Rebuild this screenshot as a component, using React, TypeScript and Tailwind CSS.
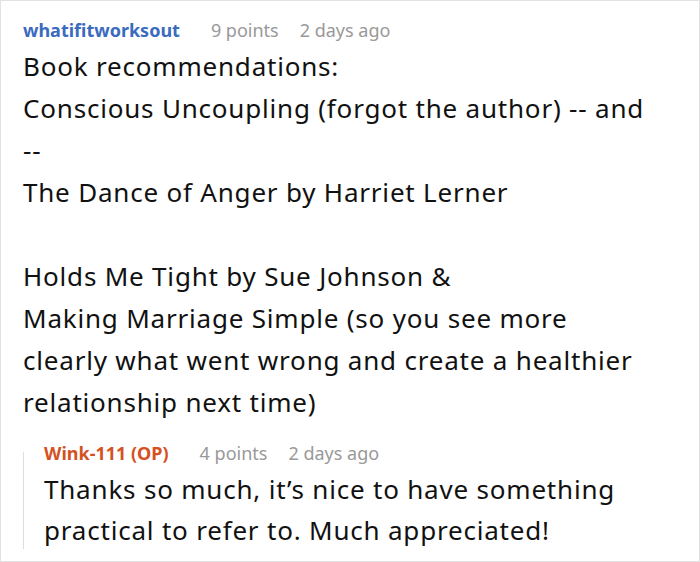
import React from 'react'

type Comment = {
  author: string
  op?: boolean
  points: number
  age: string
  lines: string[]
}

const parent: Comment = {
  author: 'whatifitworksout',
  points: 9,
  age: '2 days ago',
  lines: [
    'Book recommendations:',
    'Conscious Uncoupling (forgot the author) -- and',
    '--',
    'The Dance of Anger by Harriet Lerner',
    '',
    'Holds Me Tight by Sue Johnson &',
    'Making Marriage Simple (so you see more',
    'clearly what went wrong and create a healthier',
    'relationship next time)',
  ],
}

const reply: Comment = {
  author: 'Wink-111 (OP)',
  op: true,
  points: 4,
  age: '2 days ago',
  lines: ['Thanks so much, it’s nice to have something', 'practical to refer to. Much appreciated!'],
}

function Meta({ c }: { c: Comment }) {
  return (
    <div className="flex items-baseline text-[18px] leading-[24px]">
      <span className={c.op ? 'font-bold text-[#d4521f]' : 'font-bold text-[#3a6bbf]'}>{c.author}</span>
      <span className="ml-[31px] text-[#999]">{c.points} points</span>
      <span className="ml-[21px] text-[#999]">{c.age}</span>
    </div>
  )
}

function Body({ lines, tight }: { lines: string[]; tight?: boolean }) {
  return (
    <div className="text-[26px] tracking-[0.8px] text-[#111]">
      {lines.map((l, i) => (
        <div key={i} className={tight ? 'h-[41px] leading-[41px] whitespace-nowrap' : 'h-[42px] leading-[42px] whitespace-nowrap'}>
          {l}
        </div>
      ))}
    </div>
  )
}

export default function App() {
  return (
    <div
      className="w-[700px] h-[562px] bg-white border border-[#e2e2e2] overflow-hidden"
      style={{ fontFamily: '"Noto Sans", sans-serif' }}
    >
      <div className="pl-[22px] pt-[17px]">
        <Meta c={parent} />
        <div className="mt-[3px]">
          <Body lines={parent.lines} />
        </div>
        <div className="mt-[18px] flex">
          <div className="w-px bg-[#dedede] mt-[11px] mb-[2px]" />
          <div className="pl-[20px]">
            <Meta c={reply} />
            <div className="mt-[4px]">
              <Body lines={reply.lines} tight />
            </div>
          </div>
        </div>
      </div>
    </div>
  )
}
